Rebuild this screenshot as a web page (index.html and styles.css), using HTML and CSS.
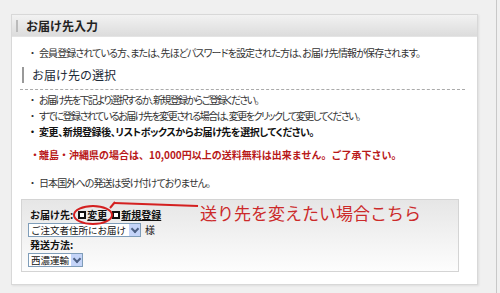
FILE: index.html
```html
<!DOCTYPE html>
<html lang="ja">
<head>
  <meta charset="UTF-8">
  <title>お届け先入力</title>
  <link rel="stylesheet" href="styles.css">
</head>
<body>
  <div class="page">
    <div class="panel">
      <h2 class="panel-head">お届け先入力</h2>
      <div class="panel-body">
        <p class="note"><span class="dot">・</span>会員登録されている方、または、先ほどパスワードを設定された方は、お届け先情報が保存されます。</p>

        <h3 class="section-title">お届け先の選択</h3>
        <ul class="info">
          <li class="first"><span class="dot">・</span>お届け先を下記より選択するか、新規登録からご登録ください。</li>
          <li class="second"><span class="dot">・</span>すでに登録されているお届け先を変更される場合は、変更をクリックして変更してください。</li>
          <li class="strong"><span class="dot">・</span>変更、新規登録後、リストボックスからお届け先を選択してください。</li>
          <li class="warn"><span class="dot">・</span>離島・沖縄県の場合は、10,000円以上の送料無料は出来ません。ご了承下さい。</li>
          <li class="last"><span class="dot">・</span>日本国外への発送は受け付けておりません。</li>
        </ul>

        <div class="choose">
          <div class="row label">
            お届け先:
            <a class="link" href="#"><span class="sq"></span>変更</a>
            <a class="link" href="#"><span class="sq"></span>新規登録</a>
          </div>
          <div class="row">
            <div class="select wide"><span class="val">ご注文者住所にお届け</span><span class="arrow"></span></div>
            <span class="sama">様</span>
          </div>
          <div class="row label">発送方法:</div>
          <div class="row">
            <div class="select"><span class="val">西濃運輸</span><span class="arrow"></span></div>
          </div>

          <!-- annotation drawn on top of the screenshot -->
          <svg class="mark" width="200" height="40" viewBox="0 0 200 40">
            <ellipse cx="71" cy="15" rx="19" ry="9" fill="none" stroke="#d42020" stroke-width="2"/>
            <path d="M176 6 L92 3" fill="none" stroke="#d42020" stroke-width="2"/>
            <path d="M93 2 L88 8" fill="none" stroke="#d42020" stroke-width="2"/>
          </svg>
          <div class="callout">送り先を変えたい場合こちら</div>
        </div>
      </div>
    </div>
  </div>
</body>
</html>
```

FILE: styles.css
```css
* {
  box-sizing: border-box;
}
body {
  margin: 0;
  background: #f0f0f0;
  font-family: "Noto Sans CJK JP", "Noto Sans", sans-serif;
  color: #333;
}
.page {
  width: 497px;
  height: 293px;
  border-right: 1px solid #c8c8c8;
  padding: 14px 0 0 11px;
}
.panel {
  width: 467px;
  height: 271px;
  background: #fff;
  border: 1px solid #d8d8d8;
  box-shadow: 1px 1px 2px rgba(0,0,0,0.08);
}
.panel-head {
  margin: 0;
  height: 22px;
  padding-left: 14px;
  font-size: 12px;
  line-height: 22px;
  color: #222;
  background: linear-gradient(#f2f2f2, #dcdcdc);
  border-bottom: 1px solid #e4e4e4;
  position: relative;
}
.panel-head::before {
  content: "";
  position: absolute;
  left: 4px; top: 5px;
  width: 2px; height: 12px;
  background: #bbb;
}
.panel-body {
  padding: 9px 12px 0 8px;
}
.note, .info {
  font-feature-settings: "palt";
  letter-spacing: -0.9px;
  white-space: nowrap;
}
.note {
  margin: 0 0 0 10px;
  font-size: 10px;
  line-height: 14px;
  display: flex;
}
.dot {
  width: 9px;
  flex: none;
  letter-spacing: 0;
}
.section-title {
  margin: 7px 0 0 2px;
  padding-left: 8px;
  font-size: 12px;
  font-weight: normal;
  line-height: 16px;
  color: #1c2a38;
  border-left: 2px solid #999;
}
.info {
  list-style: none;
  margin: 6px 0 0 0;
  padding: 2px 0 0 10px;
  border-top: 1px dashed #aaa;
  font-size: 10px;
  line-height: 16px;
}
.info li {
  display: flex;
}
.info .first {
  letter-spacing: -1.6px;
}
.info .second {
  letter-spacing: -1.5px;
}
.info .strong {
  font-weight: bold;
  color: #111;
  letter-spacing: -0.4px;
}
.info .warn {
  font-weight: bold;
  color: #b81818;
  margin-top: 7px;
  font-feature-settings: normal;
  letter-spacing: 0;
}
.info .last {
  margin-top: 12px;
  letter-spacing: -0.9px;
}
.choose {
  position: relative;
  margin: 8px 6px 0 1px;
  height: 73px;
  padding: 7px 0 0 8px;
  border: 1px solid #d4d4d4;
  background: linear-gradient(#e6e6e6, #fdfdfd);
  font-size: 10px;
  white-space: nowrap;
}
.row {
  display: flex;
  align-items: center;
  height: 15px;
}
.label {
  font-weight: bold;
  color: #111;
  gap: 3px;
}
.link {
  color: #111;
  display: flex;
  align-items: center;
  gap: 1px;
  margin-left: 2px;
}
.sq {
  width: 8px; height: 8px;
  border: 2px solid #111;
  background: #fff;
}
.select {
  display: flex;
  align-items: center;
  height: 14px;
  border: 1px solid #7f9db9;
  background: #fff;
  margin-left: -2px;
  line-height: 12px;
}
.select .val {
  padding: 0 2px;
  font-size: 9.5px;
  color: #111;
  overflow: hidden;
}
.select.wide .val {
  width: 100px;
}
.arrow {
  width: 11px; height: 12px;
  background: #c4d4f8;
  position: relative;
}
.arrow::after {
  content: "";
  position: absolute;
  left: 3px; top: 2px;
  width: 4px; height: 4px;
  border-right: 2px solid #4d6185;
  border-bottom: 2px solid #4d6185;
  transform: rotate(45deg);
}
.sama {
  margin-left: 4px;
  color: #222;
}
.mark {
  position: absolute;
  left: 0; top: 0;
}
.callout {
  position: absolute;
  left: 178px; top: 1px;
  font-size: 17px;
  line-height: 24px;
  color: #cc2a2a;
}
```
